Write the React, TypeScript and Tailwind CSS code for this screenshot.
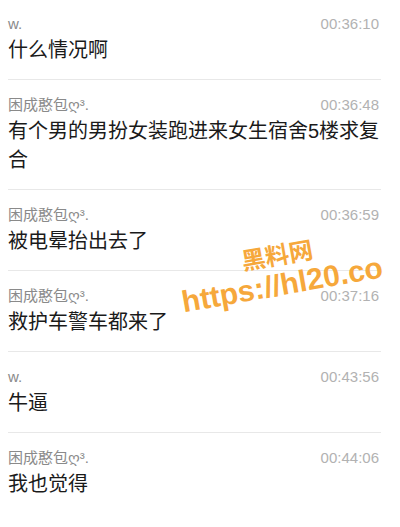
import React from "react";

type Msg = {
  name: string;
  time: string;
  text: string;
};

const messages: Msg[] = [
  { name: "w.", time: "00:36:10", text: "什么情况啊" },
  { name: "困成憨包ღ³.", time: "00:36:48", text: "有个男的男扮女装跑进来女生宿舍5楼求复合" },
  { name: "困成憨包ღ³.", time: "00:36:59", text: "被电晕抬出去了" },
  { name: "困成憨包ღ³.", time: "00:37:16", text: "救护车警车都来了" },
  { name: "w.", time: "00:43:56", text: "牛逼" },
  { name: "困成憨包ღ³.", time: "00:44:06", text: "我也觉得" },
];

function Row({ msg, last }: { msg: Msg; last: boolean }) {
  return (
    <div
      className={`ml-2 mr-[19px] pt-[15px] pb-[14px] border-b ${
        last ? "border-transparent" : "border-[#e8e8e8]"
      }`}
    >
      <div className="flex items-center justify-between leading-[20px]">
        <span className="text-[15px] text-[#8a8a8a]">{msg.name}</span>
        <span className="text-[15px] text-[#b2b2b2] pr-[2px]">{msg.time}</span>
      </div>
      <p className="mt-[2px] text-[20px] leading-[29px] text-[#1a1a1a]">{msg.text}</p>
    </div>
  );
}

export default function App() {
  return (
    <div className="relative w-[400px] h-[527px] overflow-hidden bg-white font-['Liberation_Sans','Noto_Sans_CJK_SC','DejaVu_Sans',sans-serif]">
      {/* CHAT LOG */}
      <div className="-mt-[1px]">
        {messages.map((m, i) => (
          <Row key={i} msg={m} last={i === messages.length - 1} />
        ))}
      </div>

      {/* WATERMARK */}
      <div className="absolute left-[175px] top-[243px] w-[210px] -rotate-[10deg] text-center font-bold text-[#f6a83b] pointer-events-none">
        <div className="text-[24px] leading-[26px]">黑料网</div>
        <div className="text-[30px] leading-[32px] whitespace-nowrap">https://hl20.co</div>
      </div>
    </div>
  );
}
